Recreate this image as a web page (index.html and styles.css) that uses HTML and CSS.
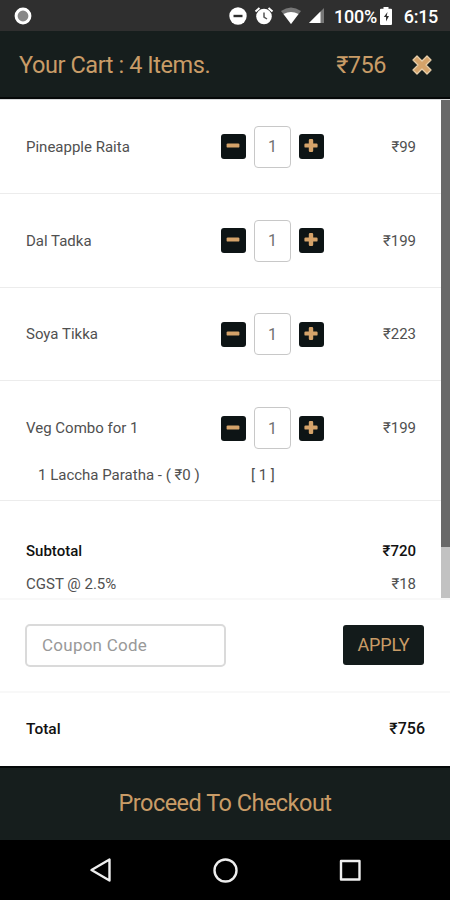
FILE: index.html
```html
<!DOCTYPE html>
<html lang="en">
<head>
<meta charset="utf-8">
<meta name="viewport" content="width=device-width, initial-scale=1">
<title>Your Cart</title>
<link rel="stylesheet" href="styles.css">
</head>
<body>
<svg class="defs" aria-hidden="true">
  <symbol id="minus" viewBox="0 0 24 24"><rect x="5.6" y="9.4" width="12.8" height="4.2" rx="1.2"/></symbol>
  <symbol id="plus" viewBox="0 0 24 24"><path d="M11 5h2q1.200 0 1.200 1.200v3.200h3.200q1.200 0 1.200 1.200v1.800q0 1.200-1.200 1.200h-3.200v3.200q0 1.200-1.200 1.200h-2q-1.200 0-1.200-1.200v-3.200h-3.200q-1.200 0-1.200-1.200v-1.800q0-1.200 1.200-1.200h3.200V6.200Q9.800 5 11 5z"/></symbol>
</svg>
<div class="phone">
  <div class="status">
    <svg class="record" width="20" height="20" viewBox="0 0 20 20"><circle cx="10" cy="10" r="6.900" fill="#888" stroke="#fff" stroke-width="3"/></svg>
    <div class="status-icons">
      <svg width="18" height="18" viewBox="0 0 18 18"><circle cx="9" cy="9" r="8.700" fill="#fff"/><path d="M4.500 9h9" stroke="#2e2e2e" stroke-width="2.400"/></svg>
      <svg width="20" height="20" viewBox="0 0 20 20"><circle cx="10" cy="10.500" r="7.800" fill="#fff"/><path d="M1.500 5.500l4-3.500M18.500 5.500l-4-3.500" stroke="#fff" stroke-width="2"/><path d="M10 6.500v4.500l3 2" fill="none" stroke="#555" stroke-width="1.500"/></svg>
      <svg width="20" height="18" viewBox="0 0 20 18"><path d="M0 4Q10-3 20 4L10 17z" fill="#777"/><path d="M2.500 7Q10 3 17.500 7L10 17z" fill="#fff"/></svg>
      <svg width="17" height="18" viewBox="0 0 17 18"><path d="M16 1v15H1z" fill="#777"/><path d="M12.500 4.500V16H1z" fill="#fff"/></svg>
    </div>
    <span class="battery-text">100%</span>
    <svg class="battery" width="12" height="18" viewBox="0 0 12 18"><path d="M3.500 0h5v1.800H11q1 0 1 1V17q0 1-1 1H1q-1 0-1-1V2.800q0-1 1-1h2.500z" fill="#fff"/><path d="M7.500 5L3.800 10H6v4.500L9 9H6.800z" fill="#333"/></svg>
    <span class="clock">6:15</span>
  </div>
  <header class="header">
    <h1 class="title">Your Cart : 4 Items.</h1>
    <span class="header-price">₹756</span>
    <svg class="close" width="22" height="22" viewBox="0 0 22 22"><path d="M6 2L11 7L16 2L20 6L15 11L20 16L16 20L11 15L6 20L2 16L7 11L2 6z" fill="#d5a36a" stroke="#e6cda9" stroke-width="1.300" stroke-linejoin="round"/></svg>
  </header>
  <main class="list">
    <div class="content">
      <section class="item">
        <span class="name">Pineapple Raita</span>
        <div class="stepper"><button class="step"><svg><use href="#minus"/></svg></button><span class="qty">1</span><button class="step"><svg><use href="#plus"/></svg></button></div>
        <span class="price">₹99</span>
      </section>
      <section class="item">
        <span class="name">Dal Tadka</span>
        <div class="stepper"><button class="step"><svg><use href="#minus"/></svg></button><span class="qty">1</span><button class="step"><svg><use href="#plus"/></svg></button></div>
        <span class="price">₹199</span>
      </section>
      <section class="item">
        <span class="name">Soya Tikka</span>
        <div class="stepper"><button class="step"><svg><use href="#minus"/></svg></button><span class="qty">1</span><button class="step"><svg><use href="#plus"/></svg></button></div>
        <span class="price">₹223</span>
      </section>
      <section class="item combo">
        <span class="name">Veg Combo for 1</span>
        <div class="stepper"><button class="step"><svg><use href="#minus"/></svg></button><span class="qty">1</span><button class="step"><svg><use href="#plus"/></svg></button></div>
        <span class="price">₹199</span>
        <span class="extra">1 Laccha Paratha - ( ₹0 )</span>
        <span class="extra-qty">[ 1 ]</span>
      </section>
      <section class="summary">
        <div class="line strong"><span>Subtotal</span><span>₹720</span></div>
        <div class="line"><span>CGST @ 2.5%</span><span>₹18</span></div>
      </section>
    </div>
    <div class="scrollbar"><div class="thumb"></div></div>
  </main>
  <section class="coupon">
    <input class="code" type="text" placeholder="Coupon Code">
    <button class="apply">APPLY</button>
  </section>
  <section class="total"><span>Total</span><span class="total-price">₹756</span></section>
  <button class="checkout">Proceed To Checkout</button>
  <nav class="nav">
    <svg width="26" height="26" viewBox="0 0 26 26"><path d="M22.500 2.500v21L4.500 13z"/></svg>
    <svg width="26" height="26" viewBox="0 0 26 26"><circle cx="13.500" cy="13.500" r="11"/></svg>
    <svg width="26" height="26" viewBox="0 0 26 26"><rect x="4" y="4" width="18.500" height="18.500"/></svg>
  </nav>
</div>
</body>
</html>
```
FILE: styles.css
```css
* { box-sizing: border-box; }
body { margin: 0; background: #fff; font-family: Roboto, "Noto Sans", sans-serif; color: #505050; }
button { font: inherit; border: 0; padding: 0; margin: 0; }
.defs { display: none; }
.phone { width: 450px; height: 900px; display: flex; flex-direction: column; overflow: hidden; background: #161e1d; }
.status { height: 31px; flex: none; display: flex; align-items: center; padding: 1px 12px 0 13px; background: #2f2f2f; color: #fff; font-size: 18px; font-weight: 500; }
.status svg { flex: none; }
.status-icons { display: flex; align-items: center; gap: 7px; margin-left: 196px; }
.battery-text { width: 43px; margin-left: 9px; letter-spacing: -0.2px; white-space: nowrap; }
.battery { margin-left: 3px; }
.clock { margin-left: auto; letter-spacing: -0.3px; }
.header { height: 68px; flex: none; display: flex; align-items: center; padding: 1px 17px 0 19px; background: #161e1d; color: #c99c67; border-bottom: 2px solid #050808; }
.title { margin: 0; font-size: 23.500px; font-weight: 400; flex: 1; letter-spacing: -0.420px; }
.header-price { font-size: 23.500px; margin-right: 25px; letter-spacing: -0.500px; }
.list { height: 499px; flex: none; display: flex; background: #fff; overflow: hidden; border-top: 1px solid #d8dadb; }
.content { flex: 1; font-size: 15px; }
.item { height: 93.800px; display: grid; grid-template-columns: 195px 103px 1fr; align-items: center; padding: 1px 25px 0 26px; border-bottom: 1px solid #ececec; }
.combo { height: 120px; grid-template-rows: 92px 1fr; }
.stepper { display: flex; align-items: center; gap: 8px; }
.step { width: 25px; height: 25px; border-radius: 3px; background: #0d1415; display: flex; }
.step svg { width: 24px; height: 24px; fill: #d5a36a; }
.qty { width: 37px; height: 42px; border: 1px solid #c8c8c8; border-radius: 4px; display: flex; align-items: center; justify-content: center; font-size: 16px; color: #707070; }
.price { text-align: right; }
.extra { padding-left: 12px; white-space: nowrap; align-self: start; line-height: 18px; margin-top: -8px; }
.extra-qty { padding-left: 30px; align-self: start; line-height: 18px; margin-top: -8px; }
.summary { padding: 32.500px 25px 0 26px; }
.line { height: 33.500px; display: flex; justify-content: space-between; align-items: center; }
.strong { color: #111; font-weight: 500; }
.scrollbar { width: 9px; background: #c2c2c2; }
.thumb { height: 447px; background: #696969; }
.coupon { height: 95px; flex: none; display: flex; justify-content: space-between; align-items: center; padding: 0 26px 1px 25px; background: #fff; border-top: 2px solid #f8f8f8; border-bottom: 2px solid #f8f8f8; }
.code { width: 201px; height: 43px; padding: 0 15px; font: 17px Roboto, sans-serif; letter-spacing: 0.250px; border: 2px solid #dadada; border-radius: 5px; }
.code::placeholder { color: #999; opacity: 1; }
.apply { width: 81px; height: 40px; border-radius: 3px; background: #131b1b; color: #c99c67; font-size: 18px; letter-spacing: -0.200px; padding-bottom: 1px; }
.total { height: 73px; flex: none; display: flex; align-items: center; justify-content: space-between; padding: 0 25px 2px 26px; background: #fff; color: #111; font-size: 15.500px; font-weight: 500; }
.total-price { font-size: 16px; }
.checkout { height: 74px; flex: none; padding-bottom: 2px; background: #161e1d; border-top: 2px solid #050909; color: #c99c67; font-size: 23.500px; letter-spacing: -0.520px; }
.nav { height: 60px; flex: none; display: flex; justify-content: space-between; align-items: center; padding: 0 87px; background: #000; }
.nav svg { fill: none; stroke: #eee; stroke-width: 2.400; stroke-linejoin: round; }
```
